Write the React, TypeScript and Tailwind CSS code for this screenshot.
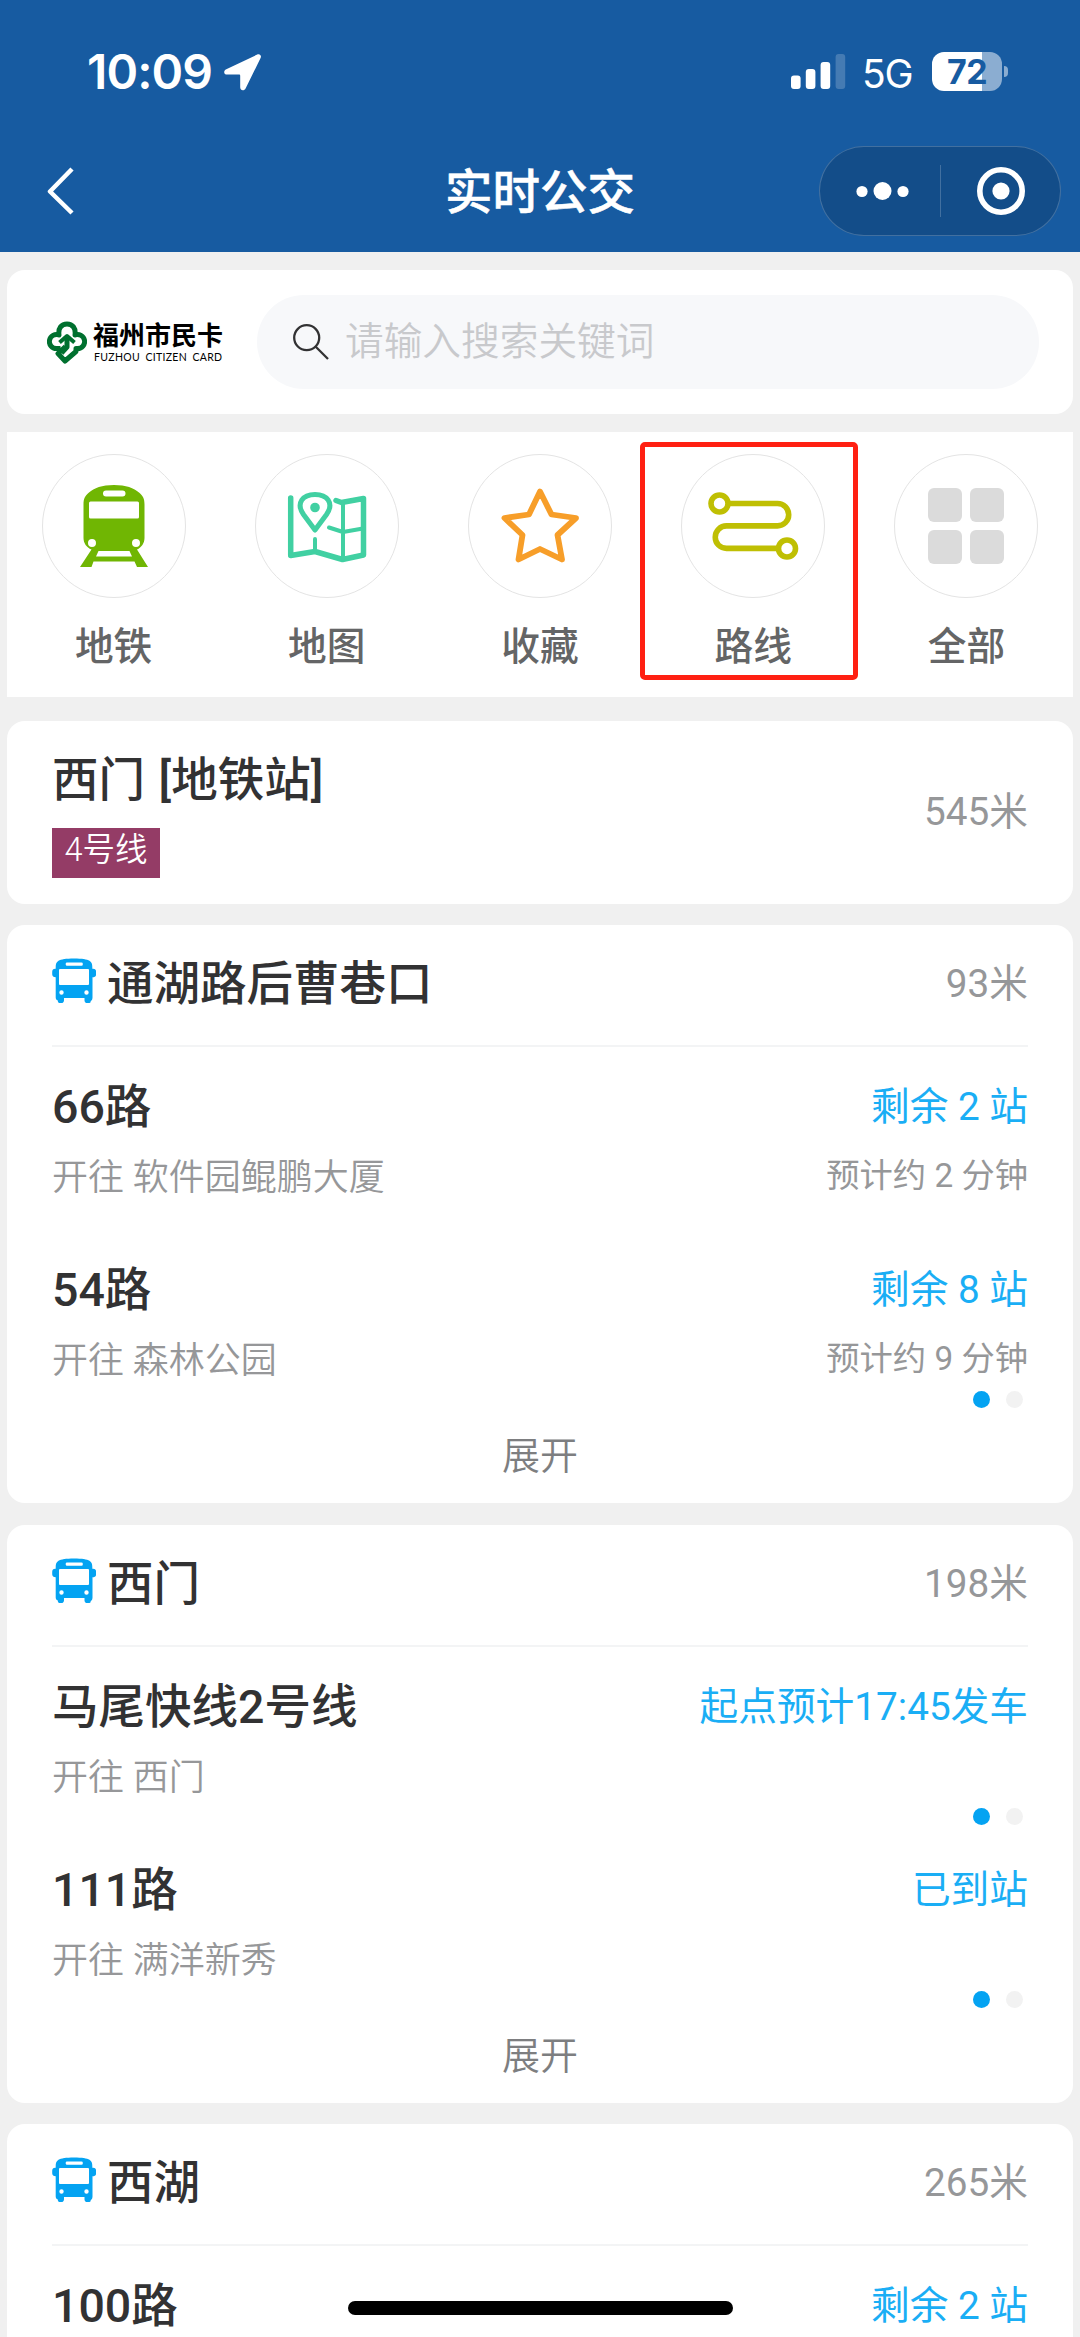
import type { ReactNode } from "react";

type Route = {
  name: string;
  to: string;
  status: string;
  eta?: string;
  dots?: boolean;
};

type Stop = { name: string; distance: string; routes: Route[] };

const stops: Stop[] = [
  {
    name: "通湖路后曹巷口",
    distance: "93米",
    routes: [
      { name: "66路", to: "软件园鲲鹏大厦", status: "剩余 2 站", eta: "预计约 2 分钟" },
      { name: "54路", to: "森林公园", status: "剩余 8 站", eta: "预计约 9 分钟", dots: true },
    ],
  },
  {
    name: "西门",
    distance: "198米",
    routes: [
      { name: "马尾快线2号线", to: "西门", status: "起点预计17:45发车", dots: true },
      { name: "111路", to: "满洋新秀", status: "已到站", dots: true },
    ],
  },
  {
    name: "西湖",
    distance: "265米",
    routes: [{ name: "100路", to: "", status: "剩余 2 站" }],
  },
];

function StatusBar() {
  return (
    <div className="flex h-[143px] items-start justify-between pl-[87px] pr-[72px] font-['Inter',sans-serif] text-white">
      <div className="flex items-start pt-[42px]">
        <span className="w-[137px] text-[48px] leading-[60px] font-semibold tracking-[-0.9px]">10:09</span>
        <svg className="mt-[12px] h-[37px] w-[38px]" viewBox="0 0 38 37" fill="white">
          <path d="M33.2.6 2.3 15.3C-1 17-.2 20.600 3.200 20.600H15c.8 0 1.200.4 1.200 1.200v11.500c0 3.500 4 4.200 5.500.9L36.700 3.800C37.700 1.400 35.600-.5 33.200.6Z" />
        </svg>
      </div>
      <div className="flex items-start">
        <svg className="mt-[54px] h-[36px] w-[55px]" viewBox="0 0 55 36" fill="white">
          <rect x="0" y="21.500" width="9.600" height="13.500" rx="3" />
          <rect x="14.800" y="15" width="9.600" height="20" rx="3" />
          <rect x="29.600" y="8" width="9.600" height="27" rx="3" />
          <rect x="44.600" y="0" width="9.600" height="35" rx="3" opacity="0.2" />
        </svg>
        <span className="mt-[49px] ml-[16px] w-[53px] text-[39px] leading-[50px] tracking-[-1.200px]">5G</span>
        <div className="mt-[52px] ml-[17px] flex h-[39px] w-[70px] items-center justify-center rounded-[12px] bg-[linear-gradient(90deg,#fff_71%,#8badd1_71%)] text-[34px] leading-none font-bold tracking-[-0.500px] text-[#175ba1]">
          72
        </div>
        <div className="mt-[66px] ml-[2px] h-[11px] w-[4px] rounded-r-full bg-[#8badd1]" />
      </div>
    </div>
  );
}

function NavBar() {
  return (
    <div className="grid h-[109px] grid-cols-[1fr_auto_1fr] items-start px-[19px] text-white">
      <svg className="mt-[24px] ml-[28px] h-[48px] w-[28px]" viewBox="0 0 28 48" fill="none" stroke="white" strokeWidth="4.500">
        <path d="M25 2 3 24.500 25 46" strokeLinejoin="round" />
      </svg>
      <h1 className="mt-[20px] text-[47.500px] leading-[60px] font-medium [-webkit-text-stroke:0.5px_white]">实时公交</h1>
      <div className="mt-[3px] flex h-[90px] w-[242px] items-center justify-self-end rounded-full border border-white/20 bg-[#134d89]">
        <svg className="h-[50px] w-[120px]" viewBox="0 0 120 50" fill="white">
          <circle cx="42" cy="25.500" r="5.600" />
          <circle cx="62.500" cy="25" r="9" />
          <circle cx="83" cy="25.500" r="5.600" />
        </svg>
        <div className="h-[52px] w-px bg-white/20" />
        <svg className="h-[50px] w-[119px]" viewBox="0 0 119 50">
          <circle cx="60" cy="25" r="21.200" fill="none" stroke="white" strokeWidth="5.600" />
          <circle cx="60" cy="25" r="8.600" fill="white" />
        </svg>
      </div>
    </div>
  );
}

function Logo() {
  return (
    <div className="flex w-[217px] items-center pl-[7px]">
      <svg className="h-[43px] w-[40px]" viewBox="0 0 40 43" fill="none" stroke="#00702f" strokeWidth="5" strokeLinejoin="round">
        <path d="M13.500 27.500H9.500a7 7 0 1 1 2.500-13.500C11 7 14.500 3 20 3s9 4 8 11a7 7 0 1 1 2.500 13.500h-1.500v3L18 40l-7-7.500 7.500-7" />
        <path d="M20 16v10l-5.500 6" />
        <path d="m12.500 21.500 7.500-6.500 7.500 6.500" strokeWidth="4" />
      </svg>
      <div className="ml-[6px] flex flex-col text-black">
        <span className="text-[26px] leading-[29px] font-bold whitespace-nowrap">福州市民卡</span>
        <span className="ml-[1px] font-['Lato',sans-serif] text-[10.500px] leading-[12px] tracking-[0.300px] whitespace-nowrap [word-spacing:2.500px]">FUZHOU CITIZEN CARD</span>
      </div>
    </div>
  );
}

function SearchCard() {
  return (
    <section className="flex h-[144px] items-center rounded-[18px] bg-white pr-[34px] pl-[33px]">
      <Logo />
      <div className="flex h-[94px] flex-1 items-center rounded-full bg-[#f7f8fa] pl-[36px]">
        <svg className="h-[36px] w-[36px]" viewBox="0 0 36 36" fill="none" stroke="#323233" strokeWidth="2.300">
          <circle cx="13.700" cy="13.700" r="12.500" />
          <path d="m22.500 22.500 12.500 12.500" />
        </svg>
        <span className="ml-[16px] text-[38.700px] leading-[50px] font-[350] text-[#c8c9cc]">请输入搜索关键词</span>
      </div>
    </section>
  );
}

const TrainIcon = (
  <svg className="h-[84px] w-[68px]" viewBox="0 0 68 84" fill="#70b603">
    <path
      fillRule="evenodd"
      d="M34 1c12 0 20 3 25 7.500 4 3.500 5.500 6 5.500 12V54c0 5-3 9.500-7.500 11.500L68 83H57l-2.500-5.500h-41L11.500 83H0l11.500-17.500C6.500 63.500 3.500 59 3.500 54V20.500c0-6 1.500-8.500 5.500-12C14 4 22 1 34 1ZM26 6.500a3 3 0 0 0 0 6h16.500a3 3 0 0 0 0-6ZM10.500 17.500a1.500 1.500 0 0 0-1.500 1.500v14a1.500 1.500 0 0 0 1.500 1.500h47a1.500 1.500 0 0 0 1.500-1.500V19a1.500 1.500 0 0 0-1.500-1.500ZM12 55a4 4 0 1 0 .01 8A4 4 0 0 0 12 55Zm44 0a4 4 0 1 0 .01 8A4 4 0 0 0 56 55ZM18.500 67l-2.500 5.500h36L49.500 67Z"
    />
  </svg>
);

const MapIcon = (
  <svg className="h-[74px] w-[80px]" viewBox="0 0 80 74" fill="none" stroke="#41d0a2" strokeWidth="5" strokeLinecap="round" strokeLinejoin="round">
    <path d="M3.700 9v57.500L28 62.500 55.500 70.500 76.500 66V9.500L54.500 13.500 49 11.500" strokeWidth="5.500" />
    <path d="M56 14v56M28 50v12M42 38.500l14 4.500 20-3.500" strokeWidth="4" />
    <path d="M28 41 16.500 25.500C8.500 14 16 5.500 28 5.500s19.500 8.500 11.500 20Z" />
    <circle cx="28" cy="18.500" r="4.800" fill="#41d0a2" stroke="none" />
  </svg>
);

const StarIcon = (
  <svg className="h-[76px] w-[80px]" viewBox="0 0 80 76" fill="none" stroke="#f79e29" strokeWidth="5.800" strokeLinejoin="round">
    <path d="m40 3.500 11.500 23L76 30 57.500 47 62 71.500 40 61 18.500 71.500 22.500 47 4.500 30l24.500-3.500Z" />
  </svg>
);

const RouteIcon = (
  <svg className="h-[70px] w-[92px]" viewBox="0 0 92 70" fill="none" stroke="#bfbf03" strokeWidth="5.600">
    <circle cx="12.500" cy="12.500" r="8.500" />
    <circle cx="80" cy="57.500" r="8.500" />
    <path d="M21 12.500h49.500a11.200 11.200 0 0 1 0 22.400H19.500a11.200 11.200 0 0 0 0 22.500H71" />
  </svg>
);

const GridIcon = (
  <div className="grid grid-cols-2 gap-[8px]">
    <i className="size-[34px] rounded-[6px] bg-[#dbdbdb]" />
    <i className="size-[34px] rounded-[6px] bg-[#dbdbdb]" />
    <i className="size-[34px] rounded-[6px] bg-[#dbdbdb]" />
    <i className="size-[34px] rounded-[6px] bg-[#dbdbdb]" />
  </div>
);

function Shortcut({ label, icon, marked }: { label: string; icon: ReactNode; marked?: boolean }) {
  return (
    <div className="relative flex flex-col items-center pt-[22px]">
      {marked && (
        <div className="absolute top-[10px] left-[-7px] h-[238px] w-[218px] rounded-[5px] border-[5px] border-[#ff2012]" />
      )}
      <div className="flex size-[144px] items-center justify-center rounded-full border border-[#e4e4e4]">{icon}</div>
      <span className="mt-[24px] text-[38.700px] leading-[50px] font-medium text-[#646566]">{label}</span>
    </div>
  );
}

function BusIcon() {
  return (
    <svg className="h-[45px] w-[44px]" viewBox="0 0 44 45" fill="#04a3f2">
      <path
        fillRule="evenodd"
        d="M22 .5c8 0 13 .8 15.500 2.300 2.200 1.400 2.800 3.500 2.800 6.200v1.800h.8c2 0 3 1 3 3v2.500c0 2-1.500 3-3.600 3v20.200c0 1.500-.5 3-1.800 3.500v.5c0 1-.8 1.700-2.700 1.700-2.200 0-3.500-1-3.500-3V40H12v2.200c0 2-1.300 3-3.300 3S5.800 44 5.800 43v-.5C4.500 42 3.700 41 3.700 39.500V19.300C1.500 19.300.2 18.300.2 16.300v-2.500c0-2 1-3 3-3h.5V9c0-2.700.6-4.800 2.800-6.200C9 1.300 14 .5 22 .5Zm-7 4a1.300 1.300 0 0 0-1.300 1.300v.6A1.300 1.300 0 0 0 15 7.700h14.500a1.300 1.300 0 0 0 1.300-1.300v-.6a1.300 1.300 0 0 0-1.300-1.300ZM8 11a1 1 0 0 0-1 1v14a1 1 0 0 0 1 1h28a1 1 0 0 0 1-1V12a1 1 0 0 0-1-1Zm1.500 21.300a2.200 2.200 0 1 0 .01 4.400 2.200 2.200 0 0 0 0-4.400Zm25 0a2.200 2.200 0 1 0 .01 4.400 2.200 2.200 0 0 0 0-4.400Z"
      />
    </svg>
  );
}

function RouteRow({ route }: { route: Route }) {
  return (
    <div className="relative flex h-[183px] justify-between pt-[30px]">
      <div>
        <div className="text-[46.500px] leading-[60px] font-medium text-[#323233]">{route.name}</div>
        {route.to && (
          <div className="mt-[16px] text-[36px] leading-[50px] font-[350] text-[#969799]">{`开往 ${route.to}`}</div>
        )}
      </div>
      <div className="text-right">
        <div className="text-[38.700px] leading-[60px] text-[#1aaef5]">{route.status}</div>
        {route.eta && <div className="mt-[14px] text-[33.300px] leading-[50px] text-[#969799]">{route.eta}</div>}
      </div>
      {route.dots && (
        <div className="absolute right-[5px] bottom-[5px] flex gap-[16px]">
          <i className="size-[17px] rounded-full bg-[#04a3f2]" />
          <i className="size-[17px] rounded-full bg-[#f2f2f2]" />
        </div>
      )}
    </div>
  );
}

function StopCard({ stop }: { stop: Stop }) {
  return (
    <section className="h-[578px] shrink-0 rounded-[18px] bg-white px-[45px]">
      <div className="flex h-[122px] items-start justify-between border-b-2 border-[#f3f4f5] pt-[29px]">
        <div className="flex items-start">
          <div className="mt-[4px]">
            <BusIcon />
          </div>
          <h2 className="ml-[11px] text-[46.500px] leading-[60px] font-medium text-[#323233]">{stop.name}</h2>
        </div>
        <span className="text-[38.700px] leading-[60px] text-[#969799]">{stop.distance}</span>
      </div>
      {stop.routes.map((r) => (
        <RouteRow key={r.name} route={r} />
      ))}
      {stop.routes.length > 1 && (
        <div className="flex h-[90px] justify-center pt-[18px] text-[38px] leading-[50px] font-[350] text-[#7d7e80]">展开</div>
      )}
    </section>
  );
}

export default function App() {
  return (
    <div className="relative flex h-[2337px] w-[1080px] flex-col overflow-hidden bg-[#f0f0f0] font-['Roboto','Noto_Sans_CJK_SC',sans-serif]">
      <header className="h-[252px] shrink-0 bg-[#175ba1]">
        <StatusBar />
        <NavBar />
      </header>
      <main className="flex flex-col px-[7px] pt-[18px]">
        <SearchCard />
        <nav className="mt-[18px] grid h-[265px] grid-cols-5 bg-white">
          <Shortcut label="地铁" icon={TrainIcon} />
          <Shortcut label="地图" icon={MapIcon} />
          <Shortcut label="收藏" icon={StarIcon} />
          <Shortcut label="路线" icon={RouteIcon} marked />
          <Shortcut label="全部" icon={GridIcon} />
        </nav>
        <section className="mt-[24px] flex h-[183px] items-start justify-between rounded-[18px] bg-white px-[45px]">
          <div className="flex h-full flex-col items-start pt-[29px]">
            <h2 className="text-[46.500px] leading-[60px] font-medium text-[#323233] [word-spacing:2px]">西门 [地铁站]</h2>
            <span className="mt-[18px] h-[50px] w-[108px] bg-[#943c66] text-center text-[32.500px] leading-[45px] font-[350] text-white">
              4号线
            </span>
          </div>
          <span className="mt-[61px] text-[38.700px] leading-[60px] text-[#969799]">545米</span>
        </section>
        <div className="mt-[21px] flex flex-col gap-[21.500px]">
          {stops.map((s) => (
            <StopCard key={s.name} stop={s} />
          ))}
        </div>
      </main>
      <div className="absolute bottom-[22px] left-[348px] h-[14px] w-[385px] rounded-full bg-black" />
    </div>
  );
}
